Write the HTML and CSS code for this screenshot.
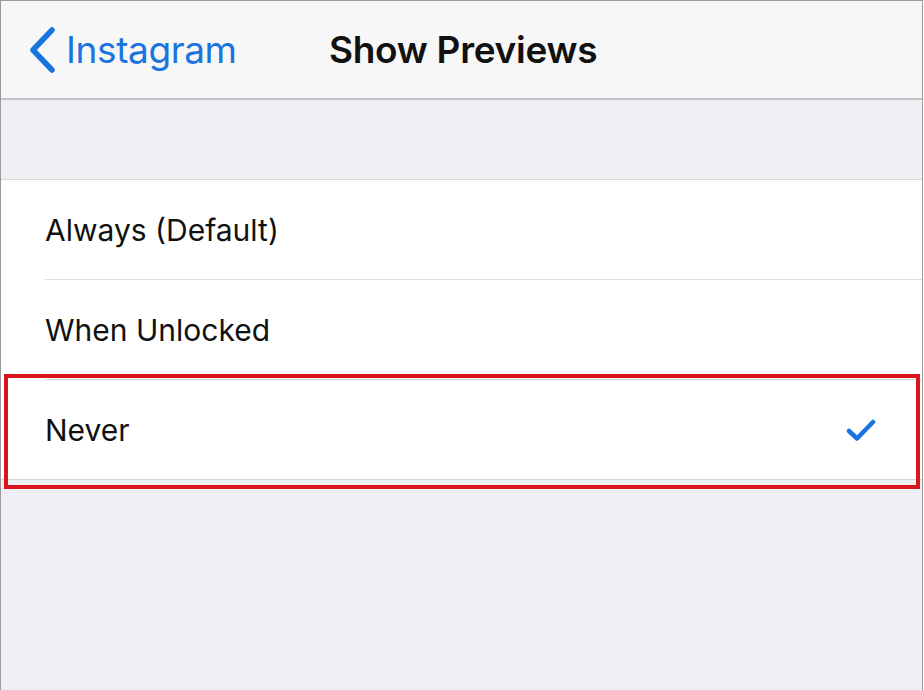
FILE: index.html
```html
<!DOCTYPE html>
<html lang="en">
<head>
    <meta charset="UTF-8">
    <title>Show Previews</title>
    <link rel="stylesheet" href="styles.css">
</head>
<body>
    <div class="frame">
        <header class="navBar">
            <a class="backLink" href="#">
                <svg class="chevron" width="28" height="46" viewBox="0 0 28 46">
                    <path d="M24 3 L5 23 L24 43" fill="none" stroke="currentColor" stroke-width="5.5" stroke-linecap="round" stroke-linejoin="round"/>
                </svg>
                <span>Instagram</span>
            </a>
            <h1 class="navTitle">Show Previews</h1>
        </header>

        <div class="groupGap"></div>

        <ul class="optionList">
            <li class="optionItem">Always (Default)</li>
            <li class="optionItem">When Unlocked</li>
            <li class="optionItem selected">
                <span>Never</span>
                <svg class="check" width="30" height="24" viewBox="0 0 30 24">
                    <path d="M3 13 L11 20.5 L27 4" fill="none" stroke="currentColor" stroke-width="4.5" stroke-linecap="round" stroke-linejoin="round"/>
                </svg>
            </li>
        </ul>
    </div>
</body>
</html>
```

FILE: styles.css
```css
html, body {
    margin: 0;
    height: 100%;
}
body {
    font-family: 'Inter', 'Liberation Sans', sans-serif;
    background: #ffffff;
    color: #111111;
}
.frame {
    box-sizing: border-box;
    height: 100%;
    width: 923px;
    border: 1px solid #9a9a9a;
    border-bottom: none;
    background: #efeff4;
    display: flex;
    flex-direction: column;
}
.navBar {
    height: 97px;
    background: #f7f7f7;
    border-bottom: 2px solid #c4c4c8;
    display: flex;
    align-items: center;
    position: relative;
}
.backLink {
    display: flex;
    align-items: center;
    gap: 10px;
    margin-left: 27px;
    color: #1a74e0;
    text-decoration: none;
    font-size: 37px;
    letter-spacing: -0.4px;
}
.navTitle {
    margin: 0;
    position: absolute;
    left: 328px;
    font-size: 37px;
    font-weight: 600;
    letter-spacing: -0.3px;
}
.groupGap {
    height: 79px;
}
.optionList {
    list-style: none;
    margin: 0;
    padding: 0;
    background: #ffffff;
    border-top: 1px solid #d6d6da;
    border-bottom: 1px solid #d6d6da;
}
.optionItem {
    height: 99px;
    margin-left: 44px;
    padding-right: 46px;
    display: flex;
    align-items: center;
    justify-content: space-between;
    font-size: 30px;
    border-bottom: 1px solid #dcdcdf;
    position: relative;
}
.optionItem:last-child {
    border-bottom: none;
}
.selected::after {
    content: '';
    position: absolute;
    left: -41px;
    right: 2px;
    top: -6px;
    bottom: -10px;
    border: 4px solid #d9141c;
}
.check {
    color: #1a74e0;
}
```
